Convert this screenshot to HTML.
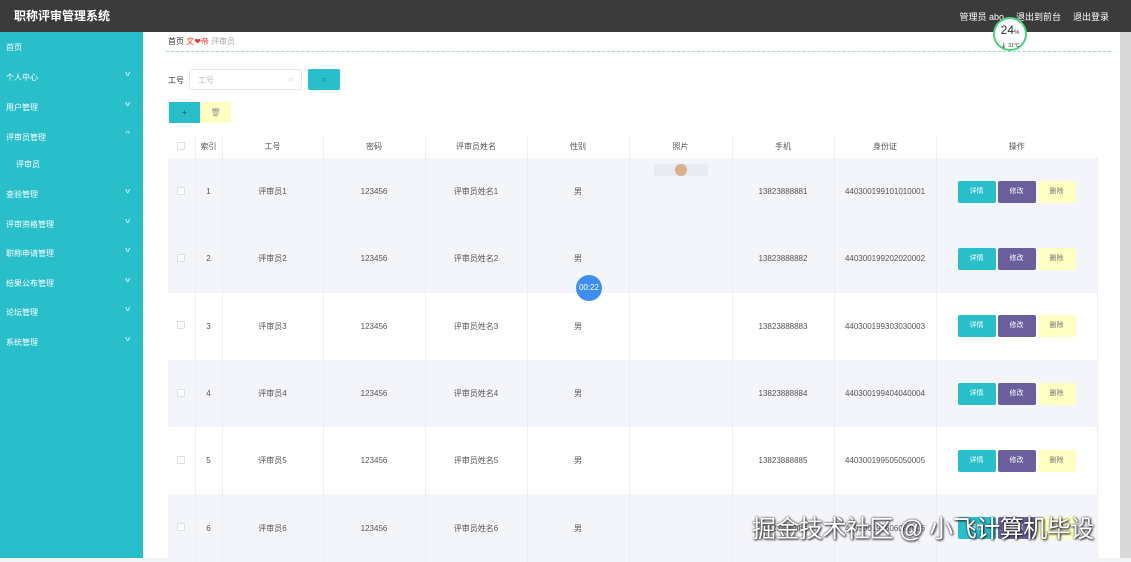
<!DOCTYPE html>
<html><head><meta charset="utf-8"><style>
*{margin:0;padding:0;box-sizing:border-box}
body{width:1131px;height:558px;overflow:hidden;background:#f3f4f6;font-family:"Liberation Sans","Noto Sans CJK SC",sans-serif;position:relative;color:#666}
.top{position:absolute;left:0;top:0;width:1131px;height:32px;background:#3b3b3b}
.top .t{position:absolute;left:14px;top:7px;color:#fff;font-size:12px;font-weight:bold}
.top .r{position:absolute;right:22px;top:10px;color:#fff;font-size:9px;word-spacing:0}
.top .r span{margin-left:12px}
.side{position:absolute;left:0;top:32px;width:143px;height:526px;background:#28bfcb}
.side div{position:absolute;left:6px;color:#fff;font-size:8px}
.side i{position:absolute;left:126px;color:#e6f8fa;font-size:7px;font-style:normal;transform:scaleX(1.4)}
.main{position:absolute;left:143px;top:32px;width:977px;height:526px;background:#fff}
.sb{position:absolute;left:1120px;top:32px;width:11px;height:526px;background:#d9d9d9}
.crumb{position:absolute;left:25px;top:4px;font-size:8px;color:#333}
.dash{position:absolute;left:23px;top:19px;width:945px;border-top:1px dashed #9dd6d9}
table{position:absolute;left:168px;top:135px;border-collapse:collapse;font-size:8px;color:#555}
td{text-align:center;border-right:1px solid #eceef3;height:67.3px}
tr.h td{height:23px;background:#fff}
tr.g td{background:#f4f5fa}
tr.w td{background:#fff}
.cb{display:inline-block;width:8px;height:8px;border:1px solid #dcdfe6;background:#fff;border-radius:1px}
.b{display:inline-block;width:38px;height:22px;line-height:22px;border-radius:2px;font-size:7px;margin:0 1px;color:#fff;vertical-align:middle}
</style></head><body>
<div class="top"><div class="t">职称评审管理系统</div><div class="r"><span>管理员 abo</span><span>退出到前台</span><span>退出登录</span></div></div>
<div class="side">
<div style="top:10px">首页</div>
<div style="top:40px">个人中心</div><i style="top:39px">v</i>
<div style="top:70px">用户管理</div><i style="top:69px">v</i>
<div style="top:100px">评审员管理</div><i style="top:99px">^</i>
<div style="top:127px;left:16px">评审员</div>
<div style="top:157px">查验管理</div><i style="top:156px">v</i>
<div style="top:187px">评审资格管理</div><i style="top:186px">v</i>
<div style="top:216px">职称申请管理</div><i style="top:215px">v</i>
<div style="top:246px">结果公布管理</div><i style="top:245px">v</i>
<div style="top:275px">论坛管理</div><i style="top:274px">v</i>
<div style="top:305px">系统管理</div><i style="top:304px">v</i>
</div>
<div class="main">
<div class="crumb">首页 <span style="color:#e33">文❤帝</span> <span style="color:#aaa">评审员</span></div>
<div class="dash"></div>
<div style="position:absolute;left:25px;top:43px;font-size:8px;color:#333">工号</div>
<div style="position:absolute;left:46px;top:37px;width:113px;height:21px;border:1px solid #e4e7ed;border-radius:3px;font-size:8px;color:#bbb;padding:5px 8px">工号<span style="float:right">○</span></div>
<div style="position:absolute;left:165px;top:37px;width:32px;height:21px;background:#28bfcb;border-radius:2px;color:#155;font-size:8px;text-align:center;line-height:21px">○</div>
<div style="position:absolute;left:26px;top:70px;width:31px;height:21px;background:#28bfcb;color:#155;font-size:8px;text-align:center;line-height:21px">+</div>
<div style="position:absolute;left:57px;top:70px;width:31px;height:21px;background:#ffffc4;color:#999;font-size:8px;text-align:center;line-height:21px">🗑</div>
</div>
<div class="sb"></div>
<table>
<tr class="h"><td style="width:27px"><span class="cb"></span></td><td style="width:27px">索引</td><td style="width:101px">工号</td><td style="width:102px">密码</td><td style="width:102px">评审员姓名</td><td style="width:102px">性别</td><td style="width:103px">照片</td><td style="width:102px">手机</td><td style="width:102px">身份证</td><td style="width:161px;border:0">操作</td></tr>
<tr class="g"><td><span class="cb"></span></td><td>1</td><td>评审员1</td><td>123456</td><td>评审员姓名1</td><td>男</td><td style="vertical-align:top"><div style="margin:6px auto 0;width:54px;height:12px;background:#e9ebf2;position:relative"><div style="position:absolute;left:21px;top:0;width:12px;height:12px;border-radius:50%;background:#d9b08c"></div></div></td><td>13823888881</td><td>440300199101010001</td><td><span class="b" style="background:#28bfcb">详情</span><span class="b" style="background:#6a5f9c">修改</span><span class="b" style="background:#ffffc4;color:#777">删除</span></td></tr>
<tr class="g"><td><span class="cb"></span></td><td>2</td><td>评审员2</td><td>123456</td><td>评审员姓名2</td><td>男</td><td></td><td>13823888882</td><td>440300199202020002</td><td><span class="b" style="background:#28bfcb">详情</span><span class="b" style="background:#6a5f9c">修改</span><span class="b" style="background:#ffffc4;color:#777">删除</span></td></tr>
<tr class="w"><td><span class="cb"></span></td><td>3</td><td>评审员3</td><td>123456</td><td>评审员姓名3</td><td>男</td><td></td><td>13823888883</td><td>440300199303030003</td><td><span class="b" style="background:#28bfcb">详情</span><span class="b" style="background:#6a5f9c">修改</span><span class="b" style="background:#ffffc4;color:#777">删除</span></td></tr>
<tr class="g"><td><span class="cb"></span></td><td>4</td><td>评审员4</td><td>123456</td><td>评审员姓名4</td><td>男</td><td></td><td>13823888884</td><td>440300199404040004</td><td><span class="b" style="background:#28bfcb">详情</span><span class="b" style="background:#6a5f9c">修改</span><span class="b" style="background:#ffffc4;color:#777">删除</span></td></tr>
<tr class="w"><td><span class="cb"></span></td><td>5</td><td>评审员5</td><td>123456</td><td>评审员姓名5</td><td>男</td><td></td><td>13823888885</td><td>440300199505050005</td><td><span class="b" style="background:#28bfcb">详情</span><span class="b" style="background:#6a5f9c">修改</span><span class="b" style="background:#ffffc4;color:#777">删除</span></td></tr>
<tr class="g"><td><span class="cb"></span></td><td>6</td><td>评审员6</td><td>123456</td><td>评审员姓名6</td><td>男</td><td></td><td>13823888886</td><td>440300199606060006</td><td><span class="b" style="background:#28bfcb">详情</span><span class="b" style="background:#6a5f9c">修改</span><span class="b" style="background:#ffffc4;color:#777">删除</span></td></tr>
</table>
<div style="position:absolute;left:993px;top:17px;width:34px;height:34px;border-radius:50%;background:#fff;border:2px solid #4cd07a;text-align:center;font-size:12px;color:#333;line-height:22px">24<span style="font-size:6px">%</span><div style="font-size:5px;line-height:4px;color:#333">🌡 31°C</div></div>
<div style="position:absolute;left:576px;top:275px;width:26px;height:26px;border-radius:50%;background:#3d8ef0;color:#fff;font-size:8px;text-align:center;line-height:26px">00:22</div>
<div style="position:absolute;left:752px;top:509px;font-size:24px;letter-spacing:-0.5px;color:#fff;text-shadow:0 0 2px #222,1px 1px 2px #222;white-space:nowrap">掘金技术社区 @ 小飞计算机毕设</div>
</body></html>
